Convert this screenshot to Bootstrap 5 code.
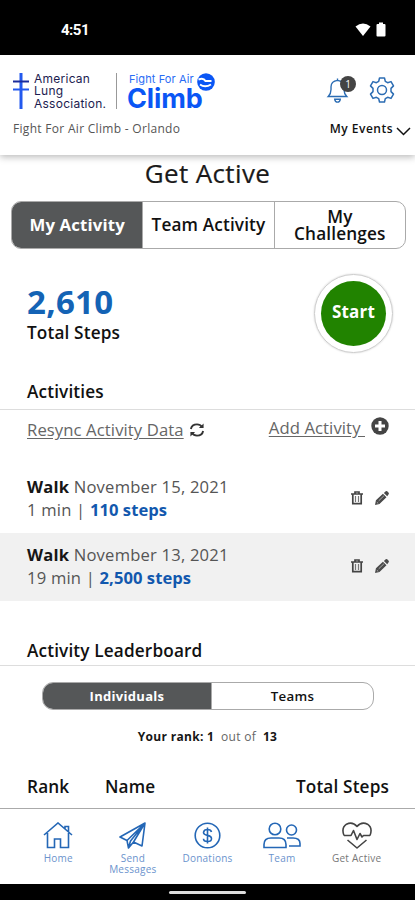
<!DOCTYPE html>
<html lang="en">
<head>
<meta charset="utf-8">
<meta name="viewport" content="width=device-width, initial-scale=1">
<title>Get Active</title>
<link href="https://cdn.jsdelivr.net/npm/bootstrap@5.3.0/dist/css/bootstrap.min.css" rel="stylesheet">
<style>
body{font-family:"Open Sans","Noto Sans",sans-serif;font-size:16px;color:#555;background:#fff;height:900px;overflow:hidden;line-height:24px}
svg{display:block;flex:none}
b{font-weight:700;color:#161616}
.semi{font-weight:600;color:#111;font-size:17.2px;letter-spacing:.15px}
.status{height:55px;background:#000;color:#fff;font-size:15px;padding:4px 28px 0 61px}
.status span{font-family:Roboto,sans-serif;font-weight:700;letter-spacing:-.5px}
.top{height:100px;box-shadow:0 2px 7px rgba(0,0,0,.28);padding:15px 4px 0 13px;background:#fff}
.brandrow{height:47px}
.ala{font-family:Inter,sans-serif;font-size:12px;line-height:12.4px;color:#1c1c50;letter-spacing:.25px;margin-left:5px;width:78px;padding-top:3px}
.rule{width:1px;height:36px;background:#999;margin:3px 0 0 4px}
.climb{font-family:Inter,sans-serif;color:#0a56f5;margin:2px 0 0 12px;width:87px}
.climb small{display:block;font-size:11px;line-height:14px;letter-spacing:.1px;white-space:nowrap;color:#2a6cf5}
.climb strong{display:block;font-size:27px;line-height:26px;letter-spacing:-.1px;font-weight:700;margin-left:-2px}
.globe{right:1px;top:1px}
.tools{padding-right:16px}
.count{width:16px;height:16px;left:14px;top:-2px;background:#444;color:#fff;font-size:10px;line-height:16px}
.event{font-size:12px;letter-spacing:.3px}
.myev{font-size:12px;letter-spacing:.5px}
h1{font-size:26px;line-height:37px;height:46px;color:#1a1a1a;font-weight:400;margin:0;letter-spacing:.35px;-webkit-text-stroke:.2px #1a1a1a}
.seg{border:1px solid #aaa;overflow:hidden;color:#111;font-weight:600;text-align:center}
.seg>div{display:flex;align-items:center;justify-content:center;flex:1 1 0}
.seg>div+div{border-left:1px solid #aaa}
.seg .on{background:#555758;color:#fff;font-weight:700}
.tabs{height:48px;margin:0 9px 0 11px;border-radius:10px;font-size:17.2px;line-height:17px;letter-spacing:.15px}
.tabs .on{font-size:16.8px}
.tabs>div{padding-bottom:1px}
.sum{height:120px;padding:25px 22px 0 27px}
.num{font-size:33px;line-height:38px;font-weight:700;color:#1463b5;margin-top:9px;letter-spacing:.3px}
.start{width:79px;height:79px;border:1px solid #ccc;box-shadow:0 0 2px #ccc;padding:6px}
.start div{background:#218300;color:#fff;font-weight:700;font-size:17px;padding-bottom:3px;letter-spacing:.2px}
.sec{border-bottom:1px solid #ddd;padding-left:27px}
.links{height:55px;padding:6px 26px 0 27px;font-size:16.7px;color:#666;letter-spacing:.08px}
.links u{text-underline-offset:2px}
.item{height:68px;padding:0 26px 2px 27px;font-size:16.6px;line-height:23.5px;color:#555;letter-spacing:.2px}
.item .st{color:#1258ae;font-weight:700;letter-spacing:.05px}
.pill{height:28px;margin:16px 41px 0 42px;border-radius:11px;font-size:13.3px;letter-spacing:.3px}
.pill>div{padding-bottom:1px}
.pill .on{flex:0 0 168px;font-size:13px}
.rank{font-size:12px;margin-top:15px;height:50px;color:#666;letter-spacing:.3px}
.thead-row{height:33px;padding:0 26px 0 27px}
.bottom{height:76px;border-top:1px solid #aaa;padding:13px 21px 0;color:#6b93cd;font-size:10px;line-height:11px;letter-spacing:.25px}
.bottom>div{flex:1 1 0;text-align:center}
.bottom svg{margin:0 auto 4px;color:#2467b6}
.bar{height:17px;background:#000}
.bar div{width:77px;height:3px;background:#ddd;border-radius:2px}
</style>
</head>
<body>
<svg width="0" height="0" class="position-absolute">
<symbol id="trash" viewBox="0 0 12 14"><path d="M0 3h12M4 2.500V1h4v1.500M1.800 3v9.700h8.400V3" fill="none" stroke="#444" stroke-width="1.700"/><path d="M4.500 5v6M7.500 5v6" stroke="#777" stroke-width="1.200"/></symbol>
<symbol id="pencil" viewBox="0 0 15 15"><path d="M0 15l1-5 7.500-7 3.800 3.600-7.500 7.200z M9.500 2.200L11.500.4q.8-.6 1.600 0l1.500 1.600q.6.800 0 1.500l-1.500 2z" fill="#4a4a4a"/><path d="M2 12l1.500 1.400M4 10.500l5.500-5.300" stroke="#ccc" stroke-width=".8"/></symbol>
</svg>
<div class="status d-flex align-items-center justify-content-between"><span>4:51</span>
<svg width="32" height="16" viewBox="0 0 32 16" fill="#fff"><path d="M.5 4.500Q8-1.500 15.500 4.500L8 14z"/><path d="M21.500 3q0-1 1-1H24V.5h4V2h1.500q1 0 1 1v10.500q0 1-1 1h-7q-1 0-1-1z"/></svg></div>
<header class="top position-relative">
<div class="brandrow d-flex">
<svg width="16" height="38" viewBox="0 0 16 38" style="margin-top:3px" fill="none" stroke="#2359ee"><path d="M8 0v36" stroke-width="3"/><path d="M0 16.500h16" stroke-width="2"/><path d="M0 8.500h16" stroke="#1b2c9c" stroke-width="2"/></svg>
<div class="ala">American<br>Lung<br>Association.</div>
<div class="rule"></div>
<div class="climb position-relative"><small>Fight For Air</small><strong>Climb</strong>
<svg class="globe position-absolute" width="18" height="18" viewBox="0 0 18 18"><circle cx="9" cy="9" r="8.800" fill="#0a56f5"/><path d="M1.500 6.500q5-2 7 1.500h6M3 11.500q5 3.500 11 0" stroke="#fff" stroke-width="2" fill="none"/></svg></div>
<div class="tools ms-auto d-flex gap-3">
<div class="position-relative me-1 mt-2"><svg width="23" height="25" viewBox="0 0 24 27" fill="none" stroke="#2b6cb3" stroke-width="1.500"><path d="M2 20h20q-3-3-3-7.500V9.500q0-6-7-7-7 1-7 7V12.500q0 4.500-3 7.500zM12 2.500V.5M9 23q.5 3 3 3t3-3z"/></svg><span class="count rounded-circle position-absolute text-center">1</span></div>
<svg style="margin-top:7px" width="26" height="26" viewBox="0 0 26 26" fill="none" stroke="#2b6cb3" stroke-width="1.500" stroke-linejoin="round"><path d="M10.500 1h5l.8 3.400 2.300 1.300 3.400-1.100 2.500 4.300L22 11.400v3.200l2.500 2.500-2.500 4.300-3.400-1.100-2.300 1.300-.8 3.400h-5l-.8-3.400-2.300-1.300L4 21.400l-2.500-4.300L4 14.600v-3.200L1.500 8.900 4 4.600l3.400 1.100 2.300-1.300z"/><circle cx="13" cy="13" r="4.500"/></svg>
</div></div>
<div class="d-flex justify-content-between"><span class="event">Fight For Air Climb - Orlando</span><span class="semi myev d-flex align-items-center" style="font-size:12px">My Events<svg class="mt-1" style="margin-left:3px" width="15" height="9" viewBox="0 0 15 9" fill="none" stroke="#111" stroke-width="1.500"><path d="M1 1l6.500 6.500L14 1"/></svg></span></div>
</header>
<main>
<h1 class="text-center">Get Active</h1>
<div class="seg tabs d-flex"><div class="on">My Activity</div><div class="text-nowrap">Team Activity</div><div class="pb-0">My<br>Challenges</div></div>
<section class="sum d-flex justify-content-between"><div><div class="num">2,610</div><div class="semi">Total Steps</div></div>
<div class="start rounded-circle"><div class="rounded-circle w-100 h-100 d-flex align-items-center justify-content-center">Start</div></div></section>
<div class="sec semi" style="height:41px;padding-top:11px">Activities</div>
<div class="links d-flex justify-content-between"><span class="d-flex align-items-center align-self-start" style="padding-top:2px"><u>Resync Activity Data</u><svg style="margin-left:5px" width="16" height="16" viewBox="0 0 17 16" fill="none" stroke="#333" stroke-width="2"><path d="M2 7q1-5 6.500-5 3.500 0 5.500 3M15 9q-1 5-6.500 5-3.500 0-5.500-3"/><path d="M15.500 1v5h-5zM1.500 15v-5h5z" fill="#333" stroke="none"/></svg></span>
<span class="d-flex align-items-center align-self-start"><u>Add Activity&nbsp;</u><svg width="18" height="18" viewBox="0 0 18 18" style="margin-left:6px;margin-bottom:4px"><circle cx="9" cy="9" r="8.700" fill="#444"/><path d="M9 4v10M4 9h10" stroke="#fff" stroke-width="3"/></svg></span></div>
<div class="item d-flex align-items-center justify-content-between"><div><b>Walk</b> November 15, 2021<br>1 min | <span class="st">110 steps</span></div><div class="d-flex gap-2"><svg width="12" height="14" class="me-1"><use href="#trash"/></svg><svg width="14" height="14"><use href="#pencil"/></svg></div></div>
<div class="item d-flex align-items-center justify-content-between" style="background:#f1f1f1"><div><b>Walk</b> November 13, 2021<br>19 min | <span class="st">2,500 steps</span></div><div class="d-flex gap-2"><svg width="12" height="14" class="me-1"><use href="#trash"/></svg><svg width="14" height="14"><use href="#pencil"/></svg></div></div>
<div class="sec semi" style="height:65px;padding-top:38px">Activity Leaderboard</div>
<div class="seg pill d-flex"><div class="on">Individuals</div><div>Teams</div></div>
<div class="rank text-center"><b>Your rank: 1</b>&nbsp; out of &nbsp;<b>13</b></div>
<div class="thead-row semi d-flex"><span style="width:78px">Rank</span><span>Name</span><span class="ms-auto">Total Steps</span></div>
</main>
<nav class="bottom d-flex">
<div><svg width="30" height="27" viewBox="0 0 30 27" fill="none" stroke="currentColor" stroke-width="1.600"><path d="M1 13L15 1l14 12M4.500 11v14.500h7V17h6v8.500h8V11M22 6.500V4.500h3.500v5.500"/></svg>Home</div>
<div><svg width="27" height="27" viewBox="0 0 27 27" fill="none" stroke="currentColor" stroke-width="1.600" stroke-linejoin="round"><path d="M26 1L1 15l7 3.500L26 1l-3 23-8.500-4L26 1M8 18.500L9.500 26l5-6M9.500 26l2-7L26 1"/></svg>Send<br>Messages</div>
<div><svg width="27" height="27" viewBox="0 0 27 27" fill="none" stroke="currentColor" stroke-width="1.600"><circle cx="13.500" cy="13.500" r="12.300"/><path d="M17.500 10q-.5-2.500-4-2.500t-4 2.800q0 2.400 4 3.100t4 3.300q0 2.800-4 2.800t-4-2.700M13.500 5.500v16"/></svg>Donations</div>
<div><svg width="38" height="27" viewBox="0 0 38 27" fill="none" stroke="currentColor" stroke-width="1.600"><circle cx="12" cy="7" r="5.800"/><path d="M1 25.500v-3q0-6.500 7-6.500h8q7 0 7 6.500v3z"/><circle cx="28.500" cy="8" r="5"/><path d="M24 16h6q7 0 7 5.500V24H26"/></svg>Team</div>
<div style="color:#777"><svg style="color:#444" width="30" height="27" viewBox="0 0 30 27" fill="none" stroke="currentColor" stroke-width="1.600" stroke-linejoin="round"><path d="M2 13.500Q-1 6 4.500 2.200 10.500-.8 15 4.500 19.500-.8 25.500 2.200 31 6 28 13.500M5.500 18L15 26l9.500-8M2 13.500h7l2.500-5 3.500 9 3-6 2 3.500 1.500-1.500H28"/></svg>Get Active</div>
</nav>
<div class="bar d-flex align-items-center justify-content-center"><div></div></div>
<script src="https://cdn.jsdelivr.net/npm/bootstrap@5.3.0/dist/js/bootstrap.bundle.min.js"></script>
</body>
</html>
